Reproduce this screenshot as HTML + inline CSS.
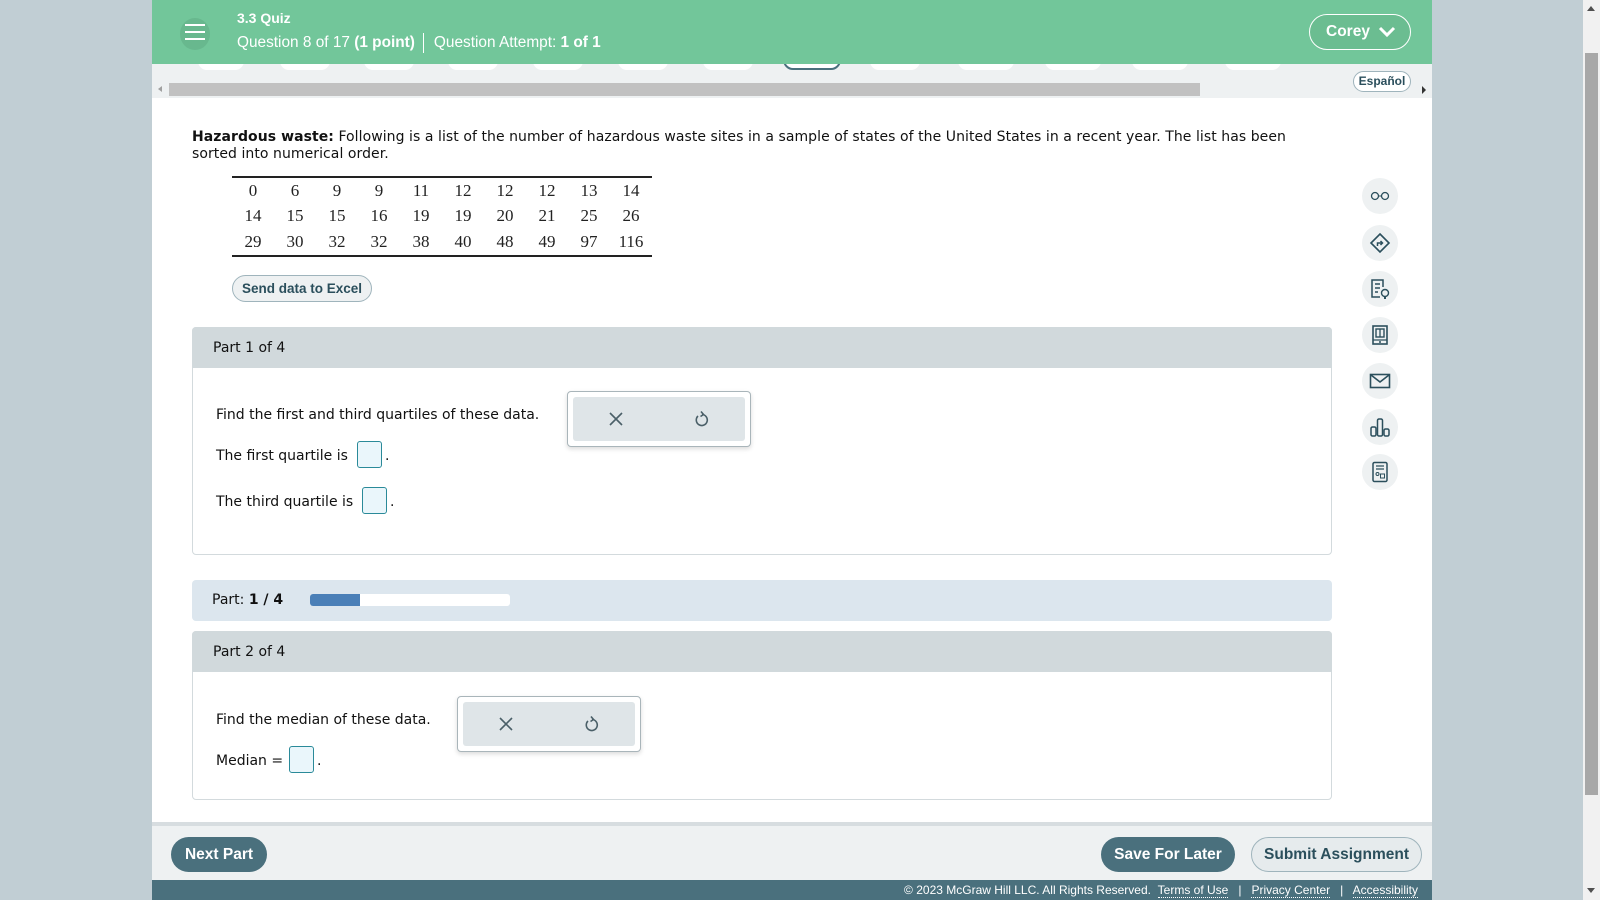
<!DOCTYPE html>
<html><head><meta charset="utf-8"><style>
*{margin:0;padding:0;box-sizing:border-box}
body{width:1600px;height:900px;overflow:hidden;background:#c1ced4;font-family:"DejaVu Sans","Liberation Sans",sans-serif;position:relative}
.a{position:absolute}
.hdr{left:152px;top:0;width:1280px;height:64px;background:#72c69a}
.lato{font-family:"Liberation Sans",sans-serif}
.v{font-family:"DejaVu Sans",sans-serif;font-size:14px;color:#111}
table{border-collapse:collapse;font-family:"Liberation Serif",serif;font-size:17px;color:#222}
td{width:42px;text-align:center;height:25.5px}
.icon{width:36px;height:36px;border-radius:50%;background:#eef1f2;display:flex;align-items:center;justify-content:center}
.inp{width:25px;height:27px;border:1px solid #2a8a99;border-radius:3px;background:#eaf6fb}
.wid{border:1px solid #a9b5ba;border-radius:4px;background:#fff;box-shadow:0 2px 5px rgba(0,0,0,.15)}
.wid .in{position:absolute;left:5px;top:5px;right:5px;bottom:5px;background:#dfe5e8;border-radius:3px}
</style></head><body>
<div class="a" style="left:1583px;top:0;width:17px;height:900px;background:#f1f1f1"></div>
<div class="a" style="left:1585px;top:53px;width:13px;height:742px;background:#a8a8a8"></div>
<div class="a" style="left:1587px;top:6px;width:0;height:0;border-left:4px solid transparent;border-right:4px solid transparent;border-bottom:5px solid #505050"></div>
<div class="a" style="left:1587px;top:888px;width:0;height:0;border-left:4px solid transparent;border-right:4px solid transparent;border-top:5px solid #505050"></div>

<div class="a" style="left:152px;top:64px;width:1280px;height:34px;background:#eef1f2"></div>
<div class="a" style="left:198px;top:52px;width:46px;height:18px;border-radius:10px;background:#fff"></div>
<div class="a" style="left:280px;top:52px;width:50px;height:18px;border-radius:10px;background:#fff"></div>
<div class="a" style="left:364px;top:52px;width:50px;height:18px;border-radius:10px;background:#fff"></div>
<div class="a" style="left:448px;top:52px;width:50px;height:18px;border-radius:10px;background:#fff"></div>
<div class="a" style="left:533px;top:52px;width:50px;height:18px;border-radius:10px;background:#fff"></div>
<div class="a" style="left:618px;top:52px;width:50px;height:18px;border-radius:10px;background:#fff"></div>
<div class="a" style="left:703px;top:52px;width:50px;height:18px;border-radius:10px;background:#fff"></div>
<div class="a" style="left:783px;top:50px;width:58px;height:20px;border-radius:12px;background:#fff;border:2px solid #4a707d"></div>
<div class="a" style="left:870px;top:52px;width:50px;height:18px;border-radius:10px;background:#fff"></div>
<div class="a" style="left:958px;top:52px;width:56px;height:18px;border-radius:10px;background:#fff"></div>
<div class="a" style="left:1045px;top:52px;width:56px;height:18px;border-radius:10px;background:#fff"></div>
<div class="a" style="left:1132px;top:52px;width:56px;height:18px;border-radius:10px;background:#fff"></div>
<div class="a" style="left:1225px;top:52px;width:56px;height:18px;border-radius:10px;background:#fff"></div>
<div class="a" style="left:169px;top:83px;width:1031px;height:13px;background:#c1c1c1"></div>
<div class="a" style="left:158px;top:86px;width:0;height:0;border-top:3px solid transparent;border-bottom:3px solid transparent;border-right:4px solid #a0a0a0"></div>
<div class="a" style="left:1422px;top:86px;width:0;height:0;border-top:4px solid transparent;border-bottom:4px solid transparent;border-left:4px solid #333"></div>
<div class="a lato" style="left:1353px;top:71px;width:58px;height:21px;border:1px solid #9fb4bc;border-radius:11px;background:#fff;font-size:12px;font-weight:bold;color:#2b4f5c;text-align:center;line-height:19px">Español</div>

<div class="a hdr"></div>
<div class="a" style="left:180px;top:18px;width:30px;height:32px;border-radius:50%;background:#68b88e"></div>
<div class="a" style="left:185px;top:24px;width:20px;height:2px;background:#fff;box-shadow:0 7px 0 #fff,0 14px 0 #fff"></div>
<div class="a lato" style="left:237px;top:10px;color:#fff;font-size:14px;font-weight:bold">3.3 Quiz</div>
<div class="a lato" style="left:237px;top:33px;color:#fff;font-size:15.4px;white-space:nowrap">Question 8 of 17 <b>(1 point)</b><span style="display:inline-block;width:1px;height:20px;background:#fff;vertical-align:middle;margin:0 10px 0 8px"></span>Question Attempt: <b>1 of 1</b></div>
<div class="a lato" style="left:1309px;top:14px;width:102px;height:36px;border:1.5px solid #fff;border-radius:18px;background:#6bbd91;color:#fff;font-weight:bold;font-size:15.5px;line-height:33px;padding-left:16px">Corey
<svg class="a" style="left:68px;top:11px" width="18" height="12" viewBox="0 0 18 12"><path d="M2 2l7 7 7-7" stroke="#fff" stroke-width="3" fill="none"/></svg></div>

<div class="a" style="left:152px;top:98px;width:1280px;height:724px;background:#fff"></div>
<div class="a v" style="left:192px;top:129px;width:1110px;line-height:17px;letter-spacing:0.06px">
<b>Hazardous waste:</b> Following is a list of the number of hazardous waste sites in a sample of states of the United States in a recent year. The list has been sorted into numerical order.</div>
<div class="a" style="left:232px;top:176px;border-top:2px solid #222;border-bottom:2px solid #222;padding:0">
<table><tr><td>0</td><td>6</td><td>9</td><td>9</td><td>11</td><td>12</td><td>12</td><td>12</td><td>13</td><td>14</td></tr>
<tr><td>14</td><td>15</td><td>15</td><td>16</td><td>19</td><td>19</td><td>20</td><td>21</td><td>25</td><td>26</td></tr>
<tr><td>29</td><td>30</td><td>32</td><td>32</td><td>38</td><td>40</td><td>48</td><td>49</td><td>97</td><td>116</td></tr></table></div>
<div class="a lato" style="left:232px;top:275px;width:140px;height:27px;border:1px solid #9fb4bc;border-radius:14px;background:#eef1f2;color:#2b4f5c;font-weight:bold;font-size:13.5px;text-align:center;line-height:25px">Send data to Excel</div>

<div class="a" style="left:192px;top:327px;width:1140px;height:228px;border:1px solid #d3dadd;border-radius:4px"></div>
<div class="a v" style="left:192px;top:327px;width:1140px;height:41px;background:#d1d9dc;border-radius:4px 4px 0 0;padding:13px 21px 0">Part 1 of 4</div>
<div class="a v" style="left:216px;top:407px">Find the first and third quartiles of these data.</div>
<div class="a v" style="left:216px;top:448px">The first quartile is</div>
<div class="a inp" style="left:357px;top:441px"></div><div class="a v" style="left:385px;top:448px">.</div>
<div class="a v" style="left:216px;top:494px">The third quartile is</div>
<div class="a inp" style="left:362px;top:487px"></div><div class="a v" style="left:390px;top:494px">.</div>
<div class="a wid" style="left:567px;top:391px;width:184px;height:56px"><div class="in"></div>
<svg class="a" style="left:41px;top:20px" width="14" height="14"><path d="M1 1l12 12M13 1L1 13" stroke="#4a5f68" stroke-width="1.6"/></svg>
<svg class="a" style="left:126px;top:18px" width="16" height="18" viewBox="0 0 16 18"><path d="M4 6a5.5 5.5 0 1 0 4-1.5" stroke="#4a5f68" stroke-width="1.6" fill="none"/><path d="M7 1.5L9.5 4.5 6.5 6.5" stroke="#4a5f68" stroke-width="1.6" fill="none"/></svg></div>

<div class="a v" style="left:192px;top:580px;width:1140px;height:41px;background:#dce6ee;border-radius:4px;padding:12px 20px 0">Part: <b>1 / 4</b></div>
<div class="a" style="left:310px;top:594px;width:200px;height:12px;background:#fff;border-radius:3px"></div>
<div class="a" style="left:310px;top:594px;width:50px;height:12px;background:#4a7fb7;border-radius:3px 0 0 3px"></div>

<div class="a" style="left:192px;top:631px;width:1140px;height:169px;border:1px solid #d3dadd;border-radius:4px"></div>
<div class="a v" style="left:192px;top:631px;width:1140px;height:41px;background:#d1d9dc;border-radius:4px 4px 0 0;padding:13px 21px 0">Part 2 of 4</div>
<div class="a v" style="left:216px;top:712px">Find the median of these data.</div>
<div class="a v" style="left:216px;top:753px">Median =</div>
<div class="a inp" style="left:289px;top:746px"></div><div class="a v" style="left:317px;top:753px">.</div>
<div class="a wid" style="left:457px;top:696px;width:184px;height:56px"><div class="in"></div>
<svg class="a" style="left:41px;top:20px" width="14" height="14"><path d="M1 1l12 12M13 1L1 13" stroke="#4a5f68" stroke-width="1.6"/></svg>
<svg class="a" style="left:126px;top:18px" width="16" height="18" viewBox="0 0 16 18"><path d="M4 6a5.5 5.5 0 1 0 4-1.5" stroke="#4a5f68" stroke-width="1.6" fill="none"/><path d="M7 1.5L9.5 4.5 6.5 6.5" stroke="#4a5f68" stroke-width="1.6" fill="none"/></svg></div>

<div class="a icon" style="left:1362px;top:178px"><svg width="20" height="10"><circle cx="5" cy="5" r="3.5" stroke="#2b4f5c" stroke-width="1.3" fill="none"/><circle cx="15" cy="5" r="3.5" stroke="#2b4f5c" stroke-width="1.3" fill="none"/><path d="M8.5 5h3" stroke="#2b4f5c"/></svg></div>
<div class="a icon" style="left:1362px;top:225px"><svg width="22" height="22"><path d="M11 2l9 9-9 9-9-9z" stroke="#2b4f5c" stroke-width="1.6" fill="none"/><path d="M8.5 14v-3h5M11.5 9l2 2-2 2" stroke="#2b4f5c" stroke-width="1.5" fill="none"/></svg></div>
<div class="a icon" style="left:1362px;top:271px"><svg width="20" height="22"><path d="M13 9V2H2v17h8" stroke="#2b4f5c" stroke-width="1.5" fill="none"/><path d="M5 6h5M5 10h5M5 14h3" stroke="#2b4f5c" stroke-width="1.4"/><circle cx="15" cy="15" r="3.5" stroke="#2b4f5c" stroke-width="1.4" fill="none"/><path d="M14 19h2v2h-2z" fill="#2b4f5c"/></svg></div>
<div class="a icon" style="left:1362px;top:317px"><svg width="20" height="22"><rect x="3" y="2" width="14" height="18" stroke="#2b4f5c" stroke-width="1.6" fill="none"/><rect x="6" y="5" width="8" height="8" stroke="#2b4f5c" stroke-width="1.4" fill="none"/><path d="M10 5v8M3 16h14" stroke="#2b4f5c" stroke-width="1.3"/><circle cx="10" cy="18" r="1" fill="#2b4f5c"/></svg></div>
<div class="a icon" style="left:1362px;top:363px"><svg width="22" height="16"><rect x="1.5" y="1.5" width="19" height="13" stroke="#2b4f5c" stroke-width="1.6" fill="none"/><path d="M2 2l9 7 9-7" stroke="#2b4f5c" stroke-width="1.6" fill="none"/></svg></div>
<div class="a icon" style="left:1362px;top:409px"><svg width="22" height="22"><rect x="2" y="11" width="5" height="9" rx="1.5" stroke="#2b4f5c" stroke-width="1.5" fill="none"/><rect x="8.5" y="3" width="5" height="17" rx="1.5" stroke="#2b4f5c" stroke-width="1.5" fill="none"/><rect x="15" y="13" width="5" height="7" rx="1.5" stroke="#2b4f5c" stroke-width="1.5" fill="none"/></svg></div>
<div class="a icon" style="left:1362px;top:454px"><svg width="18" height="22"><rect x="2" y="1.5" width="14" height="19" rx="1.5" stroke="#2b4f5c" stroke-width="1.5" fill="none"/><path d="M5 5h8M5 8h8" stroke="#2b4f5c" stroke-width="1.3"/><circle cx="6.5" cy="13" r="1.5" stroke="#2b4f5c" fill="none"/><rect x="9.5" y="13" width="4" height="4" stroke="#2b4f5c" fill="none"/></svg></div>

<div class="a" style="left:152px;top:822px;width:1280px;height:4px;background:#d7dde0"></div>
<div class="a" style="left:152px;top:826px;width:1280px;height:54px;background:#eef1f2"></div>
<div class="a lato" style="left:171px;top:837px;width:96px;height:35px;border-radius:18px;background:#4a707d;color:#fff;font-weight:bold;font-size:15.5px;text-align:center;line-height:35px">Next Part</div>
<div class="a lato" style="left:1101px;top:837px;width:134px;height:35px;border-radius:18px;background:#4a707d;color:#fff;font-weight:bold;font-size:15.5px;text-align:center;line-height:35px">Save For Later</div>
<div class="a lato" style="left:1251px;top:837px;width:171px;height:35px;border-radius:18px;background:#e6ebed;border:1px solid #9fb4bc;color:#2b4f5c;font-weight:bold;font-size:15.5px;text-align:center;line-height:33px">Submit Assignment</div>
<div class="a" style="left:152px;top:880px;width:1280px;height:20px;background:#4a707d"></div>
<div class="a lato" style="left:700px;top:883px;width:718px;text-align:right;color:#fff;font-size:12px;white-space:nowrap">© 2023 McGraw Hill LLC. All Rights Reserved. &nbsp;<span style="border-bottom:1px dotted #fff">Terms of Use</span> &nbsp; | &nbsp; <span style="border-bottom:1px dotted #fff">Privacy Center</span> &nbsp; | &nbsp; <span style="border-bottom:1px dotted #fff">Accessibility</span></div>
</body></html>
